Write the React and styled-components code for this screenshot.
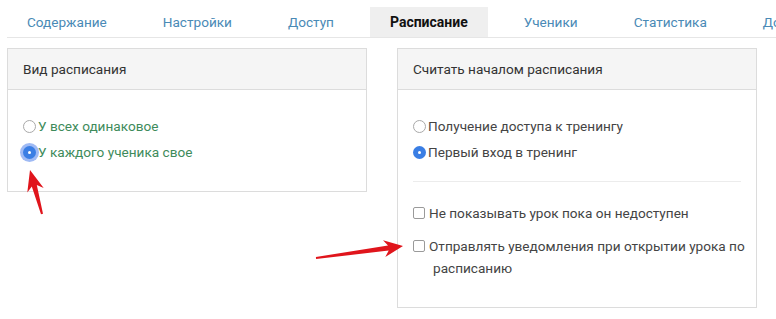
import React from "react";
import styled, { createGlobalStyle } from "styled-components";

const Global = createGlobalStyle`
  html, body { margin: 0; padding: 0; background: #fff; }
  body { font-family: Roboto, "Noto Sans", "Liberation Sans", sans-serif; }
  * { box-sizing: border-box; }
`;

const Page = styled.div`
  position: relative;
  width: 776px;
  height: 319px;
  overflow: hidden;
  padding: 7px 0 0 7px;
`;

const TabBar = styled.div`
  display: flex;
  gap: 16px;
  white-space: nowrap;
  border-bottom: 1px solid #e6e6e6;
  height: 31px;
  overflow: hidden;
`;

const Tab = styled.div`
  height: 30px;
  padding: 0 20px;
  display: flex;
  align-items: center;
  font-size: ${(p) => (p.$active ? "14px" : "13.6px")};
  color: ${(p) => (p.$active ? "#111" : "#4a8ab6")};
  font-weight: ${(p) => (p.$active ? 700 : 400)};
  background: ${(p) => (p.$active ? "#efefef" : "transparent")};
  flex-shrink: 0;
`;

const Panels = styled.div`
  display: flex;
  align-items: flex-start;
  gap: 30px;
  margin-top: 10px;
`;

const Panel = styled.div`
  width: 360px;
  border: 1px solid #dcdcdc;
  background: #fff;
`;

const PanelHeader = styled.div`
  height: 41px;
  background: #f5f5f5;
  border-bottom: 1px solid #dcdcdc;
  padding: 0 15px;
  display: flex;
  align-items: center;
  font-size: 13.6px;
  color: #333;
`;

const PanelBody = styled.div`
  padding: ${(p) => p.$pad};
`;

const Row = styled.label`
  display: flex;
  align-items: center;
  height: 26px;
  font-size: 13.6px;
  color: ${(p) => p.$color || "#444"};
  gap: 2px;
`;

const RadioDot = styled.span`
  width: 13px;
  height: 13px;
  border-radius: 50%;
  flex-shrink: 0;
  position: relative;
  border: ${(p) => (p.$checked ? "none" : "1px solid #a9a9a9")};
  background: ${(p) => (p.$checked ? "#3a7ee4" : "#fff")};
  box-shadow: ${(p) =>
    p.$glow ? "0 0 0 3px rgba(80, 130, 235, 0.55)" : "none"};
  &::after {
    content: "";
    display: ${(p) => (p.$checked ? "block" : "none")};
    position: absolute;
    left: 5px;
    top: 5px;
    width: 3px;
    height: 3px;
    border-radius: 50%;
    background: #fff;
  }
`;

const Divider = styled.div`
  height: 1px;
  background: #ececec;
  margin: 16px 0 20px;
`;

const CheckRow = styled.label`
  display: flex;
  align-items: flex-start;
  gap: 4px;
  font-size: 13.6px;
  line-height: 22px;
  color: #444;
  & + & { margin-top: 11px; }
`;

const Box = styled.span`
  width: 12px;
  height: 12px;
  margin-top: 5px;
  border: 1px solid #9a9a9a;
  border-radius: 2px;
  flex-shrink: 0;
  background: #fff;
`;

const CheckText = styled.span`
  display: block;
  white-space: nowrap;
`;

const Indent = styled.span`
  padding-left: 4px;
`;

const Overlay = styled.svg`
  position: absolute;
  left: 0;
  top: 0;
  pointer-events: none;
`;

function arrowPoints(tx, ty, hx, hy, headLen, headHalf, tailW, neckW) {
  const dx = hx - tx;
  const dy = hy - ty;
  const L = Math.hypot(dx, dy);
  const ux = dx / L;
  const uy = dy / L;
  const nx = -uy;
  const ny = ux;
  const bx = hx - ux * headLen;
  const by = hy - uy * headLen;
  const kx = hx - ux * headLen * 0.78;
  const ky = hy - uy * headLen * 0.78;
  const pts = [
    [hx, hy],
    [bx + nx * headHalf, by + ny * headHalf],
    [kx + nx * neckW, ky + ny * neckW],
    [tx + nx * tailW, ty + ny * tailW],
    [tx - nx * tailW, ty - ny * tailW],
    [kx - nx * neckW, ky - ny * neckW],
    [bx - nx * headHalf, by - ny * headHalf],
  ];
  return pts.map((p) => p.map((v) => v.toFixed(1)).join(",")).join(" ");
}

const tabs = [
  "Содержание",
  "Настройки",
  "Доступ",
  "Расписание",
  "Ученики",
  "Статистика",
  "Доступ к уроку",
];

export default function App() {
  return (
    <>
      <Global />
      <Page>
        <TabBar>
          {tabs.map((t) => (
            <Tab key={t} $active={t === "Расписание"}>
              {t}
            </Tab>
          ))}
        </TabBar>
        <Panels>
          <Panel>
            <PanelHeader>Вид расписания</PanelHeader>
            <PanelBody $pad="23px 15px 26px">
              <Row $color="#3e8b5b">
                <RadioDot />
                У всех одинаковое
              </Row>
              <Row $color="#3e8b5b">
                <RadioDot $checked $glow />
                У каждого ученика свое
              </Row>
            </PanelBody>
          </Panel>
          <Panel>
            <PanelHeader>Считать началом расписания</PanelHeader>
            <PanelBody $pad="23px 15px 28px">
              <Row>
                <RadioDot />
                Получение доступа к тренингу
              </Row>
              <Row>
                <RadioDot $checked />
                Первый вход в тренинг
              </Row>
              <Divider />
              <CheckRow>
                <Box />
                <CheckText>Не показывать урок пока он недоступен</CheckText>
              </CheckRow>
              <CheckRow>
                <Box />
                <CheckText>
                  Отправлять уведомления при открытии урока по
                  <br />
                  <Indent>расписанию</Indent>
                </CheckText>
              </CheckRow>
            </PanelBody>
          </Panel>
        </Panels>
        <Overlay width="776" height="319" viewBox="0 0 776 319">
          <polygon
            fill="#e0151c"
            points={arrowPoints(42, 214, 30, 170, 21, 8.5, 1, 2.6)}
          />
          <polygon
            fill="#e0151c"
            points={arrowPoints(316, 258, 403, 246, 19, 8.5, 1, 2.6)}
          />
        </Overlay>
      </Page>
    </>
  );
}
